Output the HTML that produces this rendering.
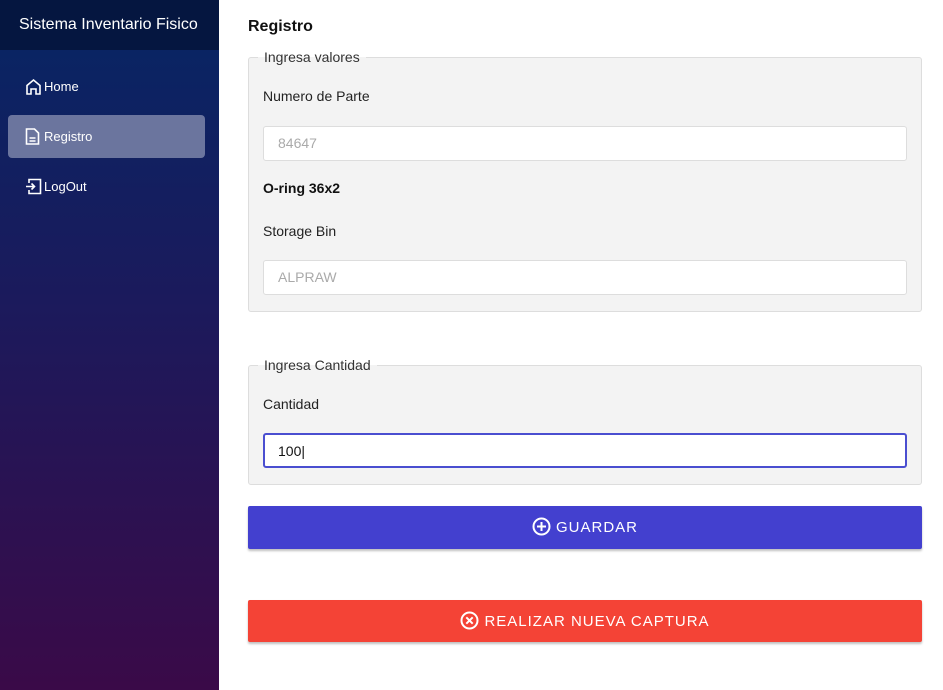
<!DOCTYPE html>
<html><head><style>
*{box-sizing:border-box;margin:0;padding:0}
body{width:943px;height:690px;overflow:hidden;background:#fff;font-family:"Liberation Sans",sans-serif;position:relative}
.side{position:absolute;left:0;top:0;width:219px;height:690px;background:linear-gradient(180deg,#0a2463 50px,#1b1a5c 300px,#3a0a48 690px)}
.hd{height:50px;background:#051640;color:#fff;font-size:16px;line-height:50px;padding-left:19px}
.it{position:absolute;left:8px;width:197px;height:43px;color:#fff;font-size:13px;line-height:43px;padding-left:36px}
.it svg{position:absolute;left:17px;top:13px}
.act{background:#6b759e;border-radius:4px}
.abs{position:absolute}
.fs{position:absolute;left:248px;width:674px;border:1px solid #ddd;border-radius:3px;background:#f3f3f3}
.lg{position:absolute;color:#333;font-size:14px;padding:0 6px;left:9px;top:-9px;line-height:16px;background:linear-gradient(#fff 50%,#f3f3f3 50%)}
.lb{position:absolute;left:263px;font-size:14px;color:#222}
.in{position:absolute;left:263px;width:644px;height:35px;border:1px solid #ddd;border-radius:3px;background:#fff;font-size:14px;color:#aaa;padding-left:14px;line-height:33px}
.btn{position:absolute;left:248px;width:674px;color:#fff;font-size:15px;letter-spacing:1px;text-align:center;border-radius:2px;box-shadow:0 2px 2px rgba(0,0,0,.25)}
.btn svg{vertical-align:-4px;margin-right:5px}
</style></head><body>
<div class="side">
<div class="hd">Sistema Inventario Fisico</div>
<div class="it" style="top:65px"><svg width="17" height="17" viewBox="0 0 17 17" fill="none" stroke="#fff" stroke-width="1.6"><path d="M2 7.5L8.5 2 15 7.5V16H11V11H6V16H2Z"/></svg>Home</div>
<div class="it act" style="top:115px"><svg width="15" height="17" viewBox="0 0 15 17" fill="none" stroke="#fff" stroke-width="1.6"><path d="M1.5 1h8l4 4v11h-12Z"/><path d="M4.5 10h6M4.5 13h6"/></svg>Registro</div>
<div class="it" style="top:165px"><svg width="17" height="17" viewBox="0 0 17 17" fill="none" stroke="#fff" stroke-width="1.6"><path d="M4 5V1.5h11.5v14H4V12"/><path d="M1 8.5h8M6.5 5.5l3 3-3 3"/></svg>LogOut</div>
</div>
<div class="abs" style="left:248px;top:18px;font-size:16px;font-weight:bold;color:#111">Registro</div>
<div class="fs" style="top:57px;height:255px"><span class="lg">Ingresa valores</span></div>
<div class="lb" style="top:88px">Numero de Parte</div>
<div class="in" style="top:126px">84647</div>
<div class="lb" style="top:180px;font-weight:bold;color:#111">O-ring 36x2</div>
<div class="lb" style="top:223px">Storage Bin</div>
<div class="in" style="top:260px">ALPRAW</div>
<div class="fs" style="top:365px;height:120px"><span class="lg">Ingresa Cantidad</span></div>
<div class="lb" style="top:396px">Cantidad</div>
<div class="in" style="top:433px;border:2px solid #4a4ed0;color:#111;padding-left:13px;line-height:33px">100|</div>
<div class="btn" style="top:506px;height:43px;line-height:43px;background:#4340cf"><svg width="19" height="19" viewBox="0 0 19 19" fill="none" stroke="#fff" stroke-width="2"><circle cx="9.5" cy="9.5" r="8"/><path d="M9.5 5v9M5 9.5h9"/></svg>GUARDAR</div>
<div class="btn" style="top:600px;height:42px;line-height:43px;background:#f44336"><svg width="19" height="19" viewBox="0 0 19 19" fill="none" stroke="#fff" stroke-width="2"><circle cx="9.5" cy="9.5" r="8"/><path d="M6.3 6.3l6.4 6.4M12.7 6.3l-6.4 6.4"/></svg>REALIZAR NUEVA CAPTURA</div>
</body></html>
